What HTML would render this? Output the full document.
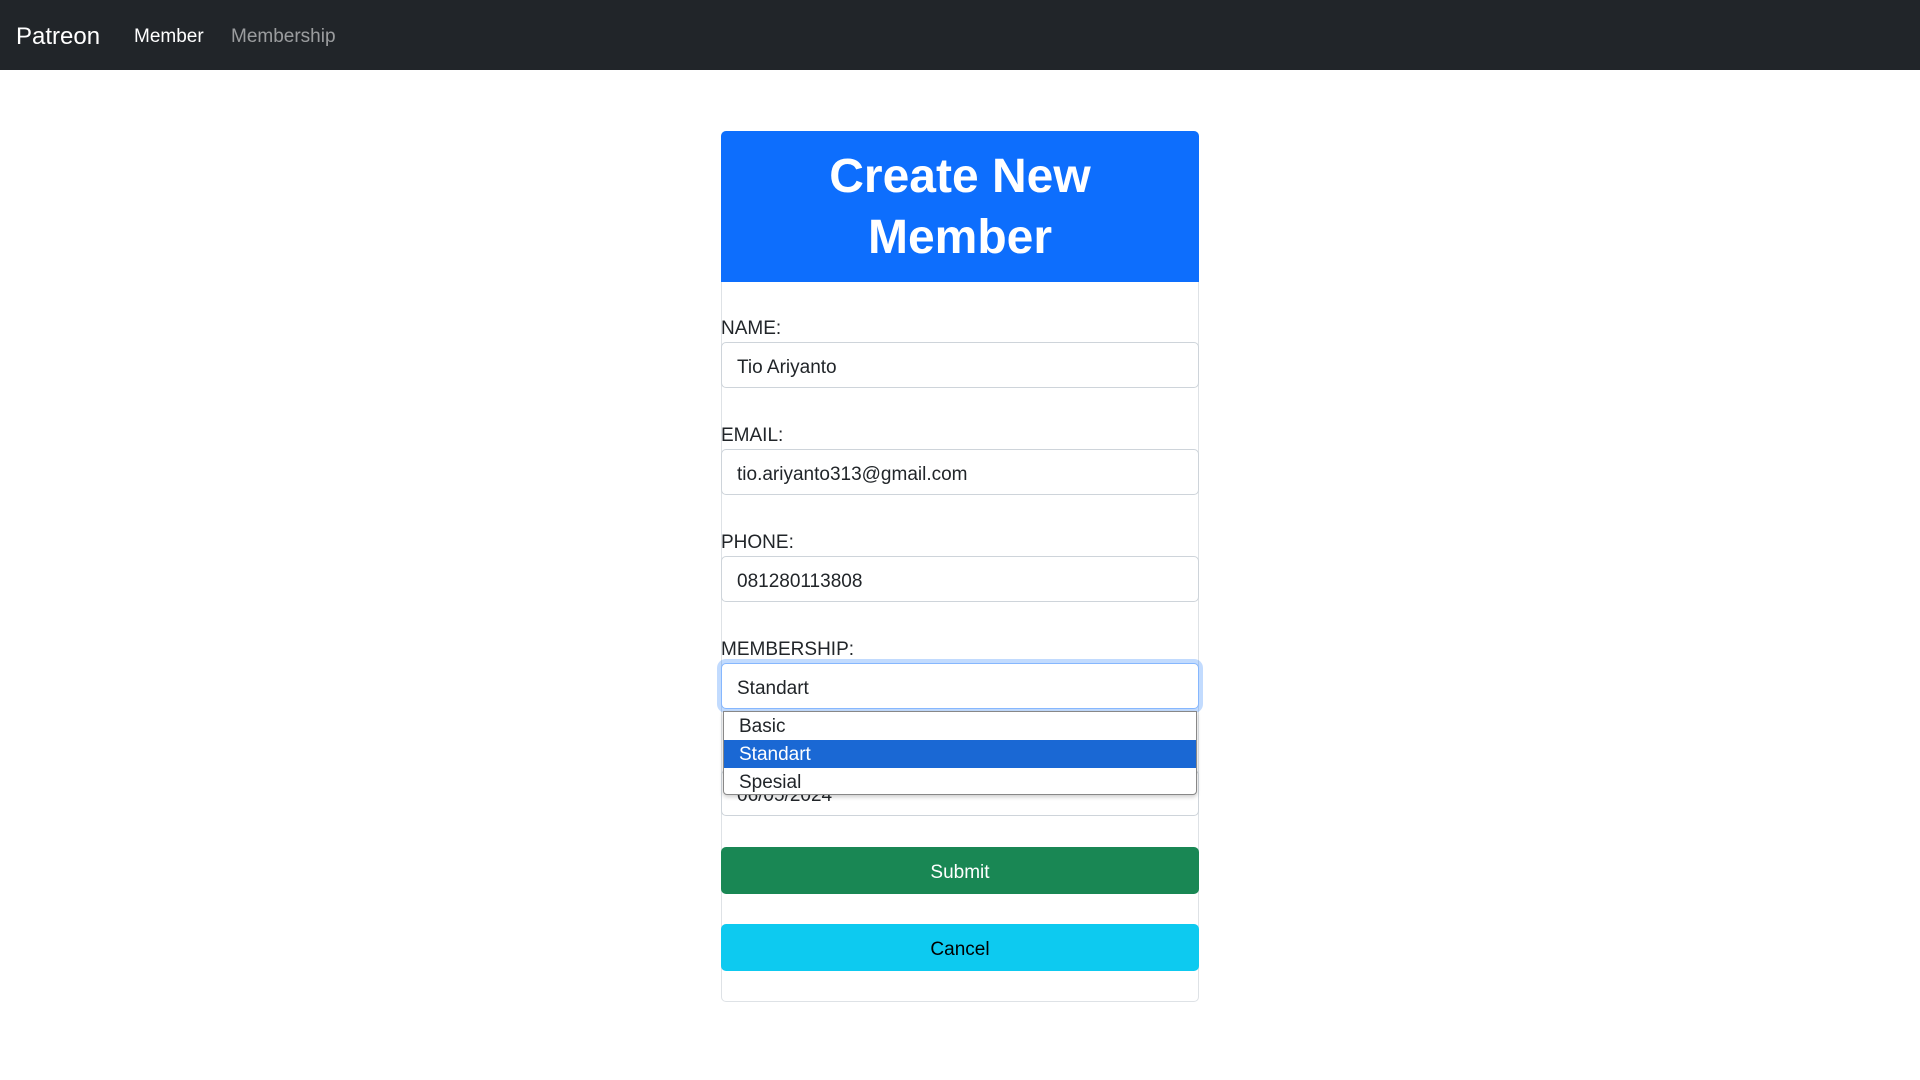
<!DOCTYPE html>
<html><head><meta charset="utf-8"><style>
*{box-sizing:border-box;margin:0;padding:0}
body{width:1920px;height:1080px;background:#fff;font-family:"Liberation Sans",sans-serif;color:#212529;position:relative;overflow:hidden}
.nav{position:absolute;left:0;top:0;width:1920px;height:70px;background:#212529}
.nav span{position:absolute;top:2px;line-height:70px;white-space:nowrap}
.card{position:absolute;left:721px;top:131px;width:478px;height:871px;border:1px solid #dee2e6;border-radius:5px}
.hd{position:absolute;left:721px;top:131px;width:478px;height:151px;background:#0d6efd;border-radius:5px 5px 0 0;color:#fff;text-align:center;font-weight:bold;font-size:48px;line-height:61px;padding-top:15px}
.lbl{position:absolute;left:721px;font-size:19px}
.inp{position:absolute;left:721px;width:478px;height:46px;border:1px solid #ced4da;border-radius:5px;font-size:19px;line-height:44px;padding-left:15px;padding-top:3px;background:#fff}
.btn{position:absolute;left:721px;width:478px;height:47px;border-radius:5px;text-align:center;font-size:19px;line-height:47px;padding-top:2px}
.dd{position:absolute;left:723px;top:711px;width:474px;height:84px;background:#fff;border:1px solid #888;border-radius:0 0 4px 4px;font-size:19px;box-shadow:0 2px 4px rgba(0,0,0,.2)}
.dd div{height:28px;line-height:28px;padding-left:15px;padding-top:1px}
</style></head><body>
<div class="nav">
<span style="left:16px;color:#fff;font-size:24px">Patreon</span>
<span style="left:134px;color:#fff;font-size:19px">Member</span>
<span style="left:231px;color:rgba(255,255,255,.55);font-size:19px">Membership</span>
</div>
<div class="card"></div>
<div class="hd">Create New<br>Member</div>
<div class="lbl" style="top:318px">NAME:</div>
<div class="inp" style="top:342px">Tio Ariyanto</div>
<div class="lbl" style="top:425px">EMAIL:</div>
<div class="inp" style="top:449px">tio.ariyanto313@gmail.com</div>
<div class="lbl" style="top:532px">PHONE:</div>
<div class="inp" style="top:556px">081280113808</div>
<div class="lbl" style="top:639px">MEMBERSHIP:</div>
<div class="inp" style="top:770px">06/05/2024</div>
<div class="inp" style="top:663px;border-color:#86b7fe;box-shadow:0 0 0 4px rgba(13,110,253,.25)">Standart</div>
<div class="dd"><div>Basic</div><div style="background:#1a68d4;color:#fff">Standart</div><div>Spesial</div></div>
<div class="btn" style="top:847px;background:#198754;color:#fff">Submit</div>
<div class="btn" style="top:924px;background:#0dcaf0;color:#000">Cancel</div>
</body></html>
